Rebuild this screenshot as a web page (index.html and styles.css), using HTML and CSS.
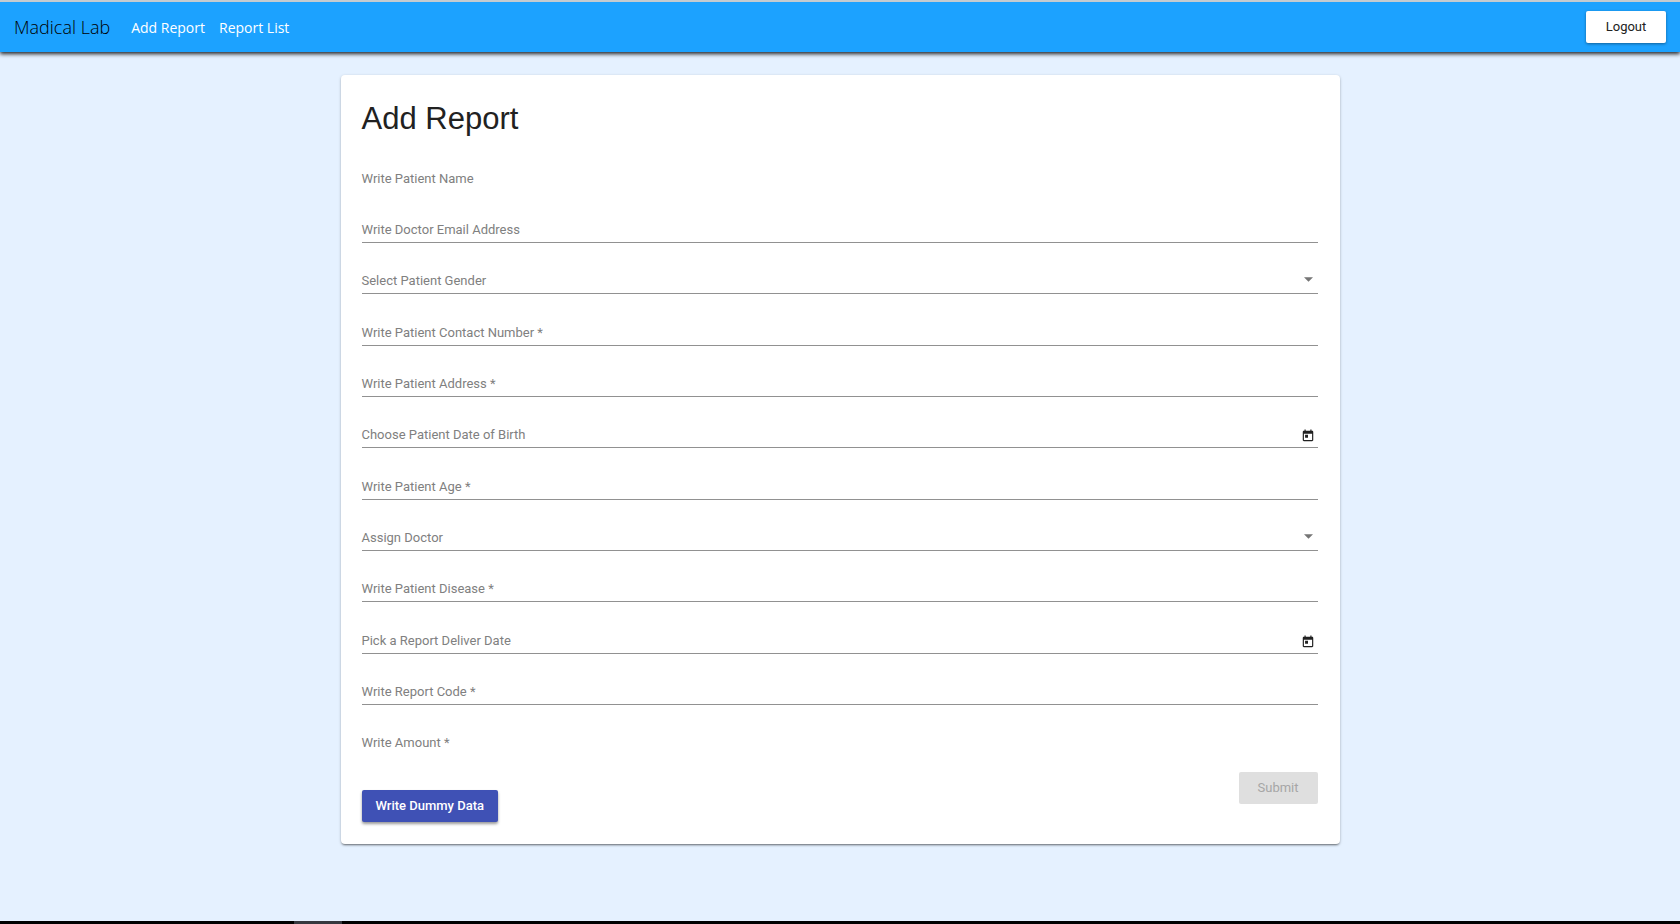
FILE: index.html
```html
<!DOCTYPE html>
<html lang="en">
<head>
<meta charset="utf-8">
<meta name="viewport" content="width=device-width, initial-scale=1">
<title>Madical Lab</title>
<link rel="stylesheet" href="styles.css">
</head>
<body>
<header class="navbar">
  <a class="brand" href="#">Madical Lab</a>
  <nav class="nav-links">
    <a href="#">Add Report</a>
    <a href="#">Report List</a>
  </nav>
  <button class="btn btn-logout" type="button">Logout</button>
</header>

<main class="page">
  <form class="card">
    <h1 class="card-title">Add Report</h1>

    <div class="field-group">
      <div class="field field-plain">
        <label for="name">Write Patient Name</label>
        <input id="name" type="text">
      </div>
      <div class="field">
        <label for="email">Write Doctor Email Address</label>
        <input id="email" type="email">
      </div>
      <div class="field">
        <label for="gender">Select Patient Gender</label>
        <select id="gender"><option value=""></option></select>
        <svg class="arrow" viewBox="0 0 10 5" aria-hidden="true"><path d="M0 0h10L5 5z"/></svg>
      </div>
    </div>

    <div class="field-group">
      <div class="field">
        <label for="contact">Write Patient Contact Number *</label>
        <input id="contact" type="tel">
      </div>
      <div class="field">
        <label for="address">Write Patient Address *</label>
        <input id="address" type="text">
      </div>
      <div class="field">
        <label for="birth">Choose Patient Date of Birth</label>
        <input id="birth" type="text">
        <button class="calendar" type="button" aria-label="Open calendar">
          <svg viewBox="0 0 24 24" aria-hidden="true"><path d="M19 3h-1V1h-2v2H8V1H6v2H5c-1.11 0-1.99.9-1.99 2L3 19c0 1.1.89 2 2 2h14c1.1 0 2-.9 2-2V5c0-1.1-.9-2-2-2zm0 16H5V8h14v11zM7 10h5v5H7z"/></svg>
        </button>
      </div>
    </div>

    <div class="field-group">
      <div class="field">
        <label for="age">Write Patient Age *</label>
        <input id="age" type="text">
      </div>
      <div class="field">
        <label for="doctor">Assign Doctor</label>
        <select id="doctor"><option value=""></option></select>
        <svg class="arrow" viewBox="0 0 10 5" aria-hidden="true"><path d="M0 0h10L5 5z"/></svg>
      </div>
      <div class="field">
        <label for="disease">Write Patient Disease *</label>
        <input id="disease" type="text">
      </div>
    </div>

    <div class="field-group">
      <div class="field">
        <label for="deliver">Pick a Report Deliver Date</label>
        <input id="deliver" type="text">
        <button class="calendar" type="button" aria-label="Open calendar">
          <svg viewBox="0 0 24 24" aria-hidden="true"><path d="M19 3h-1V1h-2v2H8V1H6v2H5c-1.11 0-1.99.9-1.99 2L3 19c0 1.1.89 2 2 2h14c1.1 0 2-.9 2-2V5c0-1.1-.9-2-2-2zm0 16H5V8h14v11zM7 10h5v5H7z"/></svg>
        </button>
      </div>
      <div class="field">
        <label for="code">Write Report Code *</label>
        <input id="code" type="text">
      </div>
      <div class="field field-plain">
        <label for="amount">Write Amount *</label>
        <input id="amount" type="text">
      </div>
    </div>

    <div class="actions">
      <button class="btn btn-primary" type="button">Write Dummy Data</button>
      <button class="btn btn-submit" type="submit" disabled>Submit</button>
    </div>
  </form>
</main>

<footer class="taskbar"><div class="taskbar-item"></div></footer>
</body>
</html>
```
FILE: styles.css
```css
* {
  box-sizing: border-box;
}

body {
  display: flex;
  flex-direction: column;
  min-height: 100vh;
  margin: 0;
  background: #e5f1ff;
  color: #212121;
  font-family: Roboto, "Liberation Sans", sans-serif;
  font-size: 13px;
}

.navbar {
  display: flex;
  align-items: center;
  height: 52px;
  padding: 0 14px;
  border-top: 2px solid #c4cbd0;
  background: #1ca2ff;
  box-shadow: 0 2px 4px rgba(0, 0, 0, 0.85);
  font-family: "Open Sans", "Noto Sans", sans-serif;
}

.navbar a {
  text-decoration: none;
}

.brand {
  color: #000;
  font-size: 18px;
  font-weight: 300;
}

.nav-links {
  display: flex;
  gap: 14px;
  margin: 0 auto 0 21px;
  font-size: 14px;
}

.nav-links a {
  color: #fff;
}

.btn {
  height: 32px;
  padding: 0 14px;
  border: 0;
  border-radius: 2px;
  font-family: Roboto, "Liberation Sans", sans-serif;
  font-size: 13px;
  line-height: 32px;
}

.btn-logout {
  min-width: 80px;
  background: #fff;
  color: #212121;
  box-shadow: 0 1px 3px rgba(0, 0, 0, 0.4);
}

.page {
  flex: 1;
  padding: 23px 20px;
}

.card {
  max-width: 999px;
  margin: 0 auto;
  padding: 22px 22px 22px 21px;
  border-radius: 4px;
  background: #fff;
  box-shadow: 0 2px 2px -1px rgba(0, 0, 0, 0.4), 0 1px 3px rgba(0, 0, 0, 0.25);
}

.card-title {
  margin: 0;
  font-family: "Liberation Sans", Arial, sans-serif;
  font-size: 31px;
  font-weight: 400;
  line-height: 44px;
}

.field-group {
  padding-bottom: 1px;
}

.field {
  display: grid;
  grid-template-columns: 1fr 19px;
  padding-top: 23px;
  border-bottom: 1px solid #919191;
}

.field-plain {
  border-bottom-color: transparent;
}

.field label,
.field input,
.field select {
  grid-row: 1;
  grid-column: 1 / -1;
  height: 27px;
  font-size: 13px;
}

.field label {
  z-index: 1;
  padding-top: 6px;
  color: #808080;
  line-height: 18px;
  pointer-events: none;
}

.field input,
.field select {
  width: 100%;
  margin: 0;
  padding: 0;
  border: 0;
  outline: 0;
  background: transparent;
  appearance: none;
}

.arrow {
  grid-row: 1;
  grid-column: 2;
  place-self: center;
  width: 9px;
  height: 5px;
  fill: #757575;
  pointer-events: none;
}

.calendar {
  z-index: 2;
  grid-row: 1;
  grid-column: 2;
  align-self: end;
  height: 22px;
  padding: 4px 2px;
  border: 0;
  background: transparent;
}

.calendar svg {
  display: block;
  width: 14px;
  height: 14px;
  fill: #212121;
}

.actions {
  display: flex;
  justify-content: space-between;
  align-items: flex-start;
  padding-top: 15px;
}

.btn-primary {
  margin-top: 18px;
  background: #3f51b5;
  color: #fff;
  font-weight: 500;
  box-shadow: 0 2px 3px rgba(0, 0, 0, 0.4);
}

.btn-submit {
  min-width: 79px;
  background: #dfdfdf;
  color: #a6a6a6;
}

.taskbar {
  height: 3px;
  padding-left: 294px;
  background: #000;
}

.taskbar-item {
  width: 48px;
  height: 3px;
  background: #36383f;
}
```
